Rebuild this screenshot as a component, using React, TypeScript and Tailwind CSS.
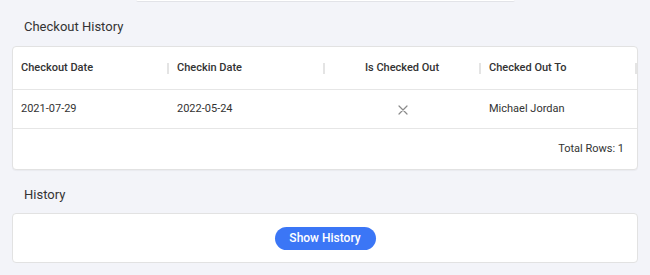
import React from 'react'

interface CheckoutRow {
  checkoutDate: string
  checkinDate: string
  isCheckedOut: boolean
  checkedOutTo: string
}

const rows: CheckoutRow[] = [
  { checkoutDate: '2021-07-29', checkinDate: '2022-05-24', isCheckedOut: false, checkedOutTo: 'Michael Jordan' },
]

const columns = [
  { label: 'Checkout Date', center: false },
  { label: 'Checkin Date', center: false },
  { label: 'Is Checked Out', center: true },
  { label: 'Checked Out To', center: false },
]

const CrossIcon = () => (
  <svg width="10" height="10" viewBox="0 0 10 10" fill="none">
    <path d="M1 1L9 9M9 1L1 9" stroke="#8a8a8a" strokeWidth="1.2" strokeLinecap="round" />
  </svg>
)

const App: React.FC = () => {
  return (
    <div
      className="min-h-[275px] w-[650px] bg-[#f3f4f9] text-[#333]"
      style={{ fontFamily: 'Roboto, "Liberation Sans", sans-serif' }}
    >
      {/* bottom edge of the card above */}
      <div className="ml-[136px] h-[2px] w-[379px] rounded-b-sm border-b border-[#e2e3e8] bg-white" />

      <div className="px-3">
        <h2 className="px-3 pt-[15px] pb-[10px] text-[13px] leading-[19px] text-[#333]">Checkout History</h2>

        {/* Checkout table */}
        <div className="rounded border border-[#e2e2e2] bg-white shadow-[0_1px_1px_rgba(0,0,0,0.04)]">
          <div className="grid h-[43px] grid-cols-4 border-b border-[#e6e6e6]">
            {columns.map(col => (
              <div key={col.label} className="flex items-center">
                <span
                  className={`flex-1 px-2 text-[11px] font-medium text-[#333] ${col.center ? 'text-center' : ''}`}
                >
                  {col.label}
                </span>
                <span className="h-[11px] w-[2px] bg-[#e4e4e4]" />
              </div>
            ))}
          </div>

          {rows.map(row => (
            <div key={row.checkoutDate} className="grid h-[39px] grid-cols-4 border-b border-[#e6e6e6] text-[11px]">
              <div className="flex items-center px-2 pt-px">{row.checkoutDate}</div>
              <div className="flex items-center px-2 pt-px">{row.checkinDate}</div>
              <div className="flex items-center justify-center pt-px">
                {row.isCheckedOut ? '✓' : <CrossIcon />}
              </div>
              <div className="flex items-center px-2 pt-px">{row.checkedOutTo}</div>
            </div>
          ))}

          <div className="flex h-[40px] items-center justify-end px-[13px] text-[11px] text-[#333]">
            Total Rows: {rows.length}
          </div>
        </div>

        <h2 className="px-3 pt-[15px] pb-[9px] text-[13px] leading-[19px] text-[#333]">History</h2>

        <div className="flex h-[50px] items-center justify-center rounded border border-[#e2e2e2] bg-white">
          <button className="h-[23px] w-[101px] rounded-full bg-[#3b76f6] text-[12px] font-medium text-white">
            Show History
          </button>
        </div>
      </div>
    </div>
  )
}

export default App
